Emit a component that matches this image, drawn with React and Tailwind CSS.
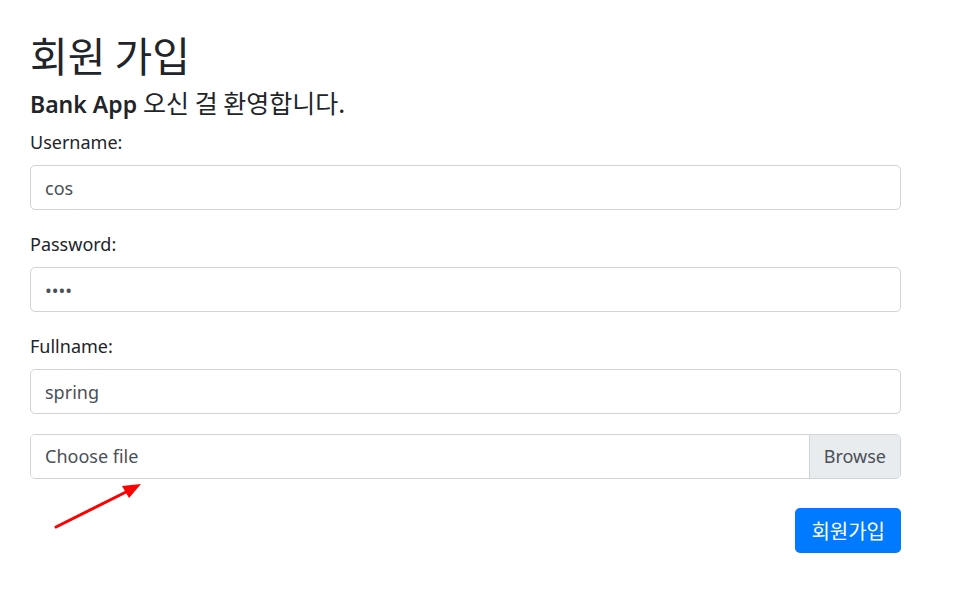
import { useState } from 'react';

function Field({ label, type = 'text', value, onChange }) {
  return (
    <div className="mb-[20px]">
      <label className="block text-[18px] leading-[28px] mb-[9px] text-[#212529]">{label}</label>
      <input
        type={type}
        value={value}
        onChange={onChange}
        className="block w-full h-[45px] px-[14px] text-[18px] text-[#495057] bg-white border border-[#ced4da] rounded-[5px] outline-none"
      />
    </div>
  );
}

function App() {
  const [form, setForm] = useState({ username: 'cos', password: '1234', fullname: 'spring' });

  const handleChange = (name) => (e) => setForm((prev) => ({ ...prev, [name]: e.target.value }));

  return (
    <div
      className="relative min-h-[600px] w-[960px] bg-white pl-[30px] pr-[59px] pt-[30px] text-[#212529]"
      style={{ fontFamily: '"Noto Sans", "Noto Sans CJK KR", sans-serif' }}
    >
      <h2 className="text-[41px] leading-[48px] font-normal mb-[10px]" style={{ fontFamily: '"Noto Sans CJK KR", sans-serif' }}>회원 가입</h2>
      <h5 className="text-[23px] leading-[29px] font-normal mb-[9px]">
        <b className="font-semibold">Bank App</b>{' '}
        <span className="text-[25px]" style={{ fontFamily: '"Noto Sans CJK KR", sans-serif' }}>오신 걸 환영합니다.</span>
      </h5>

      <form onSubmit={(e) => e.preventDefault()}>
        <Field label="Username:" value={form.username} onChange={handleChange('username')} />
        <Field label="Password:" type="password" value={form.password} onChange={handleChange('password')} />
        <Field label="Fullname:" value={form.fullname} onChange={handleChange('fullname')} />

        <div className="flex h-[45px] border border-[#ced4da] rounded-[5px] overflow-hidden mb-[29px]">
          <div className="flex-1 flex items-center px-[14px] text-[18px] text-[#495057] bg-white">Choose file</div>
          <div className="flex items-center px-[14px] text-[18px] text-[#495057] bg-[#e9ecef] border-l border-[#ced4da]">Browse</div>
        </div>

        <div className="flex justify-end">
          <button
            type="submit"
            className="h-[45px] px-[16px] text-[20px] text-white bg-[#007bff] rounded-[5px]"
            style={{ fontFamily: '"Noto Sans CJK KR", sans-serif' }}
          >
            회원가입
          </button>
        </div>
      </form>

      <svg className="absolute left-[50px] top-[478px]" width="100" height="55" viewBox="0 0 100 55">
        <line x1="6" y1="49" x2="80" y2="12" stroke="#ff0000" strokeWidth="3" strokeLinecap="round" />
        <polygon points="91,6 72,8 79,20" fill="#ff0000" />
      </svg>
    </div>
  );
}

export default App;
